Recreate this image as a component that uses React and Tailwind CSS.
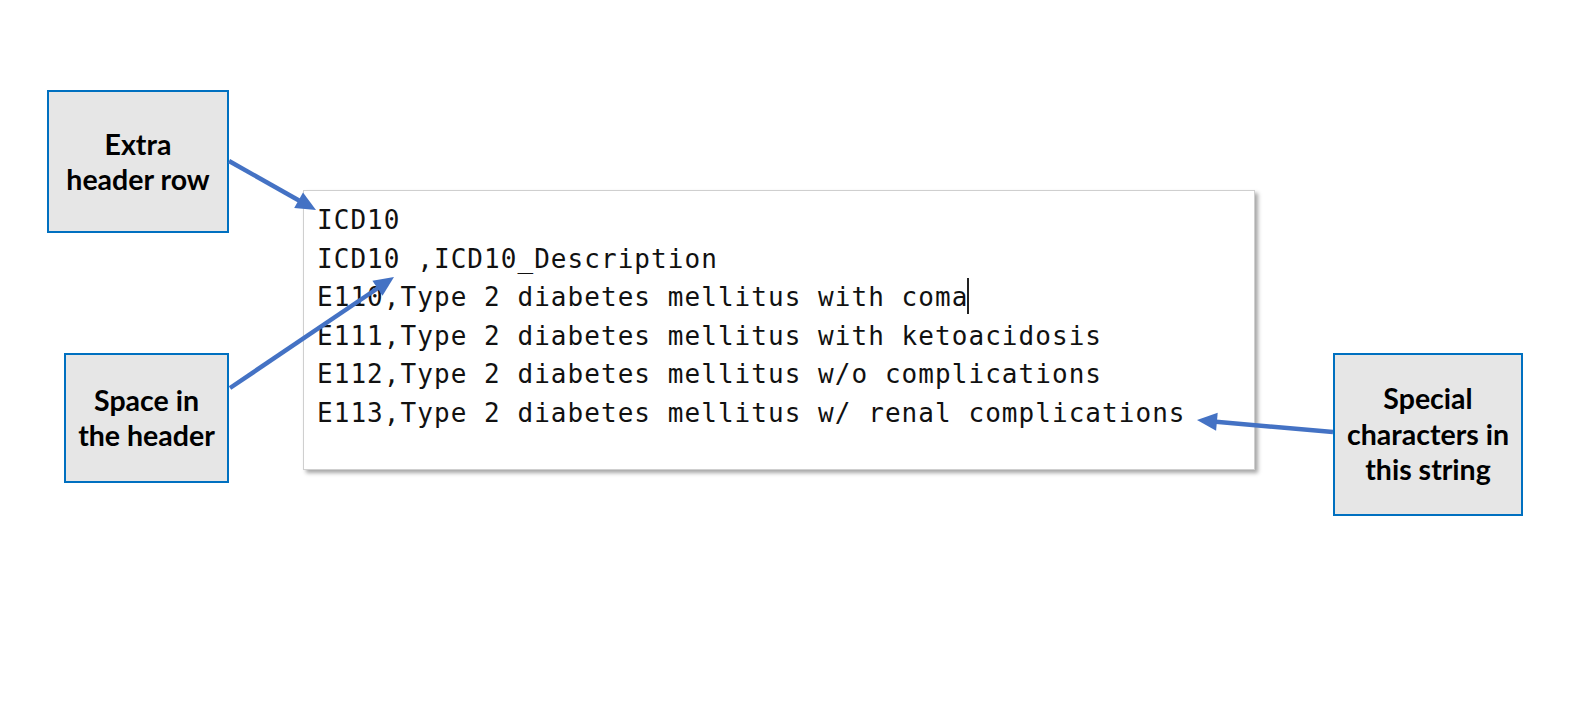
export default function App() {
  const lines = [
    "ICD10",
    "ICD10 ,ICD10_Description",
    "E110,Type 2 diabetes mellitus with coma",
    "E111,Type 2 diabetes mellitus with ketoacidosis",
    "E112,Type 2 diabetes mellitus w/o complications",
    "E113,Type 2 diabetes mellitus w/ renal complications",
  ];
  const calloutFont = { fontFamily: "Lato, 'Open Sans', sans-serif" };
  return (
    <div className="relative w-[1586px] h-[727px] bg-white overflow-hidden">
      <div className="pt-[190px] pl-[303px]">
        <div className="w-[952px] h-[280px] bg-white border border-[#cfcfcf] shadow-[3px_3px_4px_rgba(0,0,0,0.35)] pt-[10px] pl-[13px]">
          {lines.map((l, i) => (
            <div
              key={i}
              className="whitespace-pre text-[26px] leading-[38.5px] tracking-[1.05px] text-[#111]"
              style={{ fontFamily: "'DejaVu Sans Mono', 'Liberation Mono', monospace" }}
            >
              {l}
              {i === 2 && (
                <span className="inline-block w-[2px] h-[36px] bg-[#222] align-[-8px] -ml-[1px]"></span>
              )}
            </div>
          ))}
        </div>
      </div>

      {/* callouts */}
      <div
        className="absolute left-[47px] top-[90px] w-[182px] h-[143px] bg-[#e6e6e6] border-2 border-[#0070c0] flex items-center justify-center text-center font-bold text-[28.5px] leading-[35.5px] text-black"
        style={calloutFont}
      >
        <div className="pt-[1px]">
          Extra
          <br />
          header row
        </div>
      </div>
      <div
        className="absolute left-[64px] top-[353px] w-[165px] h-[130px] bg-[#e6e6e6] border-2 border-[#0070c0] flex items-center justify-center text-center font-bold text-[28.5px] leading-[35.5px] text-black"
        style={calloutFont}
      >
        <div>
          Space in
          <br />
          the header
        </div>
      </div>
      <div
        className="absolute left-[1333px] top-[353px] w-[190px] h-[163px] bg-[#e6e6e6] border-2 border-[#0070c0] flex items-center justify-center text-center font-bold text-[28.5px] leading-[35.5px] text-black"
        style={calloutFont}
      >
        <div>
          Special
          <br />
          characters in
          <br />
          this string
        </div>
      </div>

      {/* arrows */}
      <svg
        className="absolute left-0 top-0 pointer-events-none"
        width="1586"
        height="727"
        viewBox="0 0 1586 727"
      >
        <g stroke="#4472c4" strokeWidth="4.5" fill="none" strokeLinecap="butt">
          <line x1="229" y1="161" x2="299" y2="200.5" />
          <line x1="230" y1="388" x2="378" y2="288" />
          <line x1="1333" y1="432" x2="1216" y2="421.8" />
        </g>
        <g fill="#4472c4">
          <polygon points="316,210 294.2,208 303,192.4" />
          <polygon points="394,277 382.5,295.7 372.4,280.8" />
          <polygon points="1197,420 1217.7,412.8 1216.1,430.8" />
        </g>
      </svg>
    </div>
  );
}
